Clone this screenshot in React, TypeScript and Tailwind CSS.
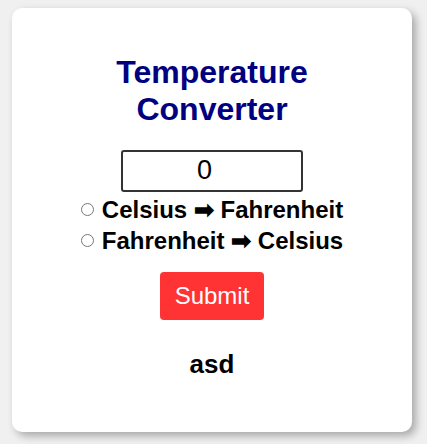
import { useState } from "react";

const options = [
  { id: "c2f", label: "Celsius ➡ Fahrenheit" },
  { id: "f2c", label: "Fahrenheit ➡ Celsius" },
];

export default function App() {
  const [value, setValue] = useState("0");
  const [mode, setMode] = useState("");

  return (
    <div className="min-h-screen bg-[#f0f0f0] pt-2 pl-3 font-['Liberation_Sans',Arial,sans-serif]">
      <div className="flex h-[424px] w-[400px] flex-col items-center rounded-[10px] bg-white pt-[46px] shadow-[4px_4px_8px_rgba(0,0,0,0.3)]">
        <h1 className="w-[320px] text-center text-[32px] font-bold leading-[36.8px] text-[#000080]">
          Temperature Converter
        </h1>

        <input
          type="number"
          value={value}
          onChange={(e) => setValue(e.target.value)}
          className="mt-[22px] h-[42px] w-[182px] rounded-[3px] border-2 border-[#333] text-center text-[27px] text-black outline-none"
        />

        {/* radio options */}
        <div className="mt-[4px] flex flex-col items-center gap-[4px]">
          {options.map((o) => (
            <label
              key={o.id}
              className="flex items-center text-[24px] font-bold leading-[27px] text-black"
            >
              <input
                type="radio"
                name="mode"
                checked={mode === o.id}
                onChange={() => setMode(o.id)}
                className="mr-[8px] h-[13px] w-[13px]"
              />
              {o.label}
            </label>
          ))}
        </div>

        <button className="mt-[18px] h-12 w-[104px] rounded-[4px] bg-[#ff3333] text-[24px] text-white">
          Submit
        </button>

        <h2 className="mt-[29px] text-[26px] font-bold leading-[30px] text-black">asd</h2>
      </div>
    </div>
  );
}
